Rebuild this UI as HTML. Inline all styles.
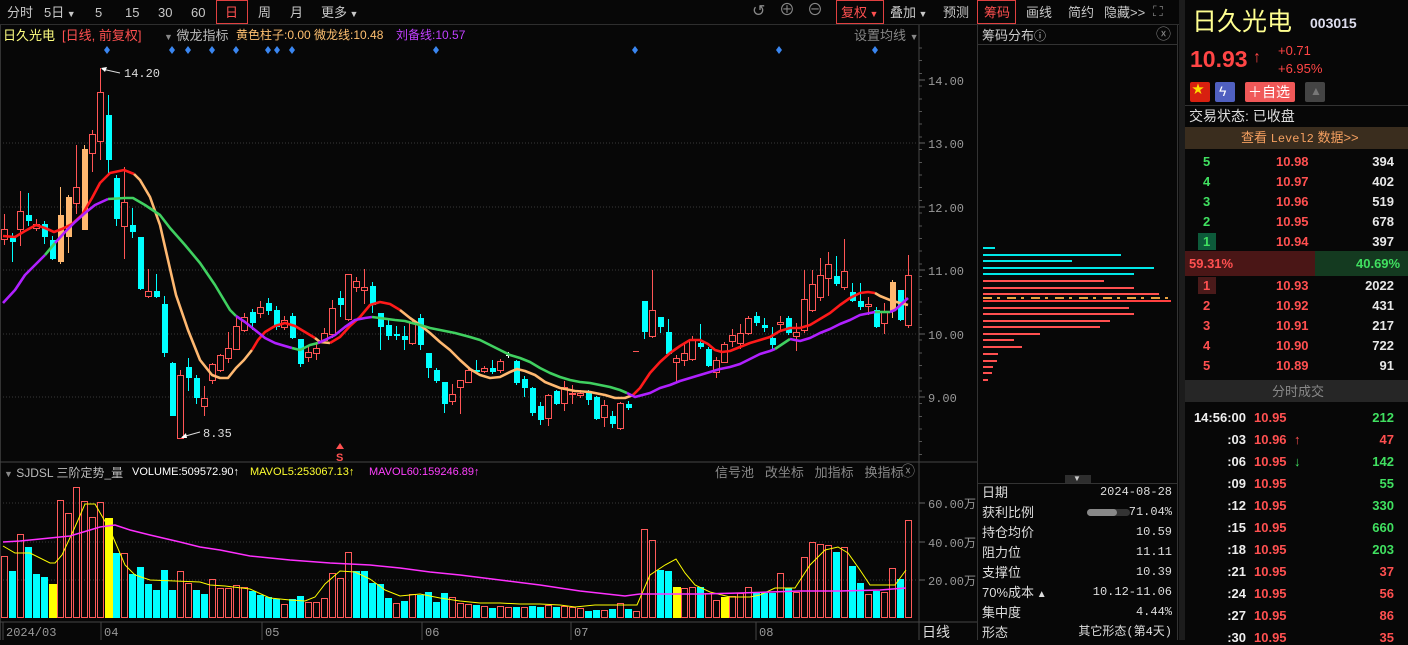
<!DOCTYPE html>
<html><head><meta charset="utf-8">
<style>
*{margin:0;padding:0;box-sizing:border-box}
body{width:1408px;height:640px;background:#070707;overflow:hidden;position:relative;font-family:"Liberation Sans","Noto Sans CJK SC",sans-serif;font-size:13px;color:#c8c8c8}
.a{position:absolute;white-space:nowrap;line-height:1}
.box{position:absolute;border:1px solid #e04040}
.m{font-family:"Liberation Mono","Noto Sans CJK SC",monospace}
.r{text-align:right}
</style></head><body>
<!-- toolbar -->
<div class="a" style="left:0;top:0;width:1180px;height:25px;border-bottom:1px solid #2e2e2e"></div>
<div class="a" style="left:7px;top:6px">分时</div>
<div class="a" style="left:44px;top:6px">5日<span style="font-size:9px"> ▼</span></div>
<div class="a" style="left:95px;top:6px">5</div>
<div class="a" style="left:125px;top:6px">15</div>
<div class="a" style="left:158px;top:6px">30</div>
<div class="a" style="left:191px;top:6px">60</div>
<div class="box" style="left:216px;top:0;width:32px;height:24px"></div>
<div class="a" style="left:225px;top:6px;color:#ff5050">日</div>
<div class="a" style="left:258px;top:6px">周</div>
<div class="a" style="left:290px;top:6px">月</div>
<div class="a" style="left:321px;top:6px">更多<span style="font-size:9px"> ▼</span></div>
<div class="a" style="left:752px;top:4px;font-size:16px;color:#888">↺</div>
<div class="a" style="left:779px;top:3px;font-size:16px;color:#888">⊕</div>
<div class="a" style="left:807px;top:3px;font-size:16px;color:#888">⊖</div>
<div class="box" style="left:836px;top:0;width:48px;height:24px"></div>
<div class="a" style="left:841px;top:6px;color:#ff5050">复权<span style="font-size:9px"> ▼</span></div>
<div class="a" style="left:890px;top:6px">叠加<span style="font-size:9px"> ▼</span></div>
<div class="a" style="left:943px;top:6px">预测</div>
<div class="box" style="left:977px;top:0;width:39px;height:24px"></div>
<div class="a" style="left:984px;top:6px;color:#ff5050">筹码</div>
<div class="a" style="left:1026px;top:6px">画线</div>
<div class="a" style="left:1068px;top:6px">简约</div>
<div class="a" style="left:1104px;top:6px">隐藏&gt;&gt;</div>
<div class="a" style="left:1153px;top:4px;font-size:14px;color:#888">⛶</div>

<!-- chart header -->
<div class="a" style="left:3px;top:29px;color:#ffff80">日久光电</div>
<div class="a" style="left:62px;top:29px;color:#ff5050">[日线, 前复权]</div>
<div class="a" style="left:164px;top:29px;color:#bbb"><span style="font-size:9px;color:#888">▼</span> 微龙指标</div>
<div class="a" style="left:236px;top:29px;color:#ffc070;font-size:12px">黄色柱子:0.00 微龙线:10.48</div>
<div class="a" style="left:396px;top:29px;color:#c040ff;font-size:12px">刘备线:10.57</div>
<div class="a" style="left:854px;top:29px;color:#888">设置均线 <span style="font-size:9px">▼</span></div>

<svg class="a" style="left:0;top:0" width="977" height="640" id="sv" shape-rendering="crispEdges"></svg>

<!-- volume header -->
<div class="a" style="left:4px;top:467px;color:#bbb;font-size:12px"><span style="font-size:9px;color:#888">▼</span> SJDSL 三阶定势_量</div>
<div class="a" style="left:132px;top:467px;color:#fff;font-size:11px">VOLUME:509572.90↑</div>
<div class="a" style="left:250px;top:467px;color:#ffff30;font-size:11px">MAVOL5:253067.13↑</div>
<div class="a" style="left:369px;top:467px;color:#ff40ff;font-size:11px">MAVOL60:159246.89↑</div>
<div class="a" style="left:715px;top:466px;color:#888">信号池&nbsp;&nbsp;&nbsp;改坐标&nbsp;&nbsp;&nbsp;加指标&nbsp;&nbsp;&nbsp;换指标</div>
<div class="a" style="left:901px;top:464px;color:#888;font-size:14px">ⓧ</div>
<div class="a" style="left:922px;top:625px;color:#ddd;font-size:14px">日线</div>

<!-- chip panel -->
<div class="a" style="left:977px;top:25px;width:1px;height:615px;background:#333"></div>
<div class="a" style="left:1177px;top:25px;width:1px;height:615px;background:#333"></div>
<div class="a" style="left:977px;top:44px;width:200px;height:1px;background:#333"></div>
<div class="a" style="left:982px;top:29px;color:#ccc">筹码分布<span style="font-size:12px">ⓘ</span></div>
<div class="a" style="left:1156px;top:27px;color:#888;font-size:15px">ⓧ</div>
<div class="a" style="left:1065px;top:475px;width:26px;height:8px;background:#2e2e2e"></div>
<div class="a" style="left:1073px;top:475px;font-size:8px;color:#ccc">▼</div>
<div class="a" style="left:977px;top:483px;width:200px;height:1px;background:#333"></div>
<div id="chip"></div>

<!-- right panel -->
<div class="a" style="left:1179px;top:0;width:6px;height:640px;background:#1c1c1c"></div>
<div class="a" style="left:1192px;top:10px;color:#ffff90;font-size:25px">日久光电</div>
<div class="a" style="left:1310px;top:16px;color:#dde;font-size:14px;font-weight:bold">003015</div>
<div class="a" style="left:1190px;top:48px;color:#ff4545;font-size:23px;font-weight:bold">10.93</div>
<div class="a" style="left:1253px;top:50px;color:#ff4545;font-size:16px;font-weight:bold">↑</div>
<div class="a" style="left:1278px;top:44px;color:#ff4545;font-size:13px">+0.71</div>
<div class="a" style="left:1278px;top:62px;color:#ff4545;font-size:13px">+6.95%</div>
<div class="a" style="left:1190px;top:82px;width:20px;height:20px;background:#d82010;border-radius:2px;color:#ffde00;font-size:12px;padding:1px 2px">★</div>
<div class="a" style="left:1215px;top:82px;width:20px;height:20px;background:#5060c0;border-radius:2px;color:#fff;font-size:14px;padding:2px 4px">ϟ</div>
<div class="a" style="left:1245px;top:82px;width:50px;height:20px;background:#f05858;border-radius:2px;color:#fff;font-size:14px;padding:3px 3px">＋自选</div>
<div class="a" style="left:1305px;top:82px;width:20px;height:20px;background:#444;border-radius:2px;color:#777;font-size:12px;padding:3px 5px">▲</div>
<div class="a" style="left:1185px;top:105px;width:223px;height:1px;background:#333"></div>
<div class="a" style="left:1189px;top:109px;color:#ddd;font-size:14px">交易状态: 已收盘</div>
<div class="a" style="left:1185px;top:127px;width:223px;height:22px;background:#3a2d1e"></div>
<div class="a" style="left:1241px;top:131px;color:#f5a060;font-size:13px">查看 <span class="m" style="font-size:12px">Level2</span> 数据&gt;&gt;</div>
<div class="a" style="left:1185px;top:251px;width:130px;height:25px;background:#4a1616"></div>
<div class="a" style="left:1315px;top:251px;width:93px;height:25px;background:#143a20"></div>
<div class="a" style="left:1189px;top:257px;color:#ff5050;font-size:13px;font-weight:bold">59.31%</div>
<div class="a" style="left:1356px;top:257px;color:#40e060;font-size:13px;font-weight:bold">40.69%</div>
<div class="a" style="left:1198px;top:233px;width:18px;height:17px;background:#0d5a3a"></div>
<div class="a" style="left:1198px;top:277px;width:18px;height:17px;background:#4a1a1a"></div>
<div id="ob"></div>
<div class="a" style="left:1185px;top:380px;width:223px;height:22px;background:#262626"></div>
<div class="a" style="left:1272px;top:385px;color:#888;font-size:13px">分时成交</div>
<div id="tr"></div>

<script>
const sv=document.getElementById('sv');
let h='';
[143,207,270,334,397].forEach(y=>{h+=`<line x1="0" x2="916" y1="${y}" y2="${y}" stroke="#3a3a3a" stroke-dasharray="1,2"/>`});
[503,542,580].forEach(y=>{h+=`<line x1="0" x2="916" y1="${y}" y2="${y}" stroke="#3a3a3a" stroke-dasharray="1,2"/>`});
h+=`<line x1="0.5" x2="0.5" y1="25" y2="640" stroke="#333"/>`;
h+=`<line x1="919" x2="919" y1="25" y2="640" stroke="#444"/>`;
h+=`<line x1="0" x2="977" y1="462" y2="462" stroke="#444"/>`;
h+=`<line x1="0" x2="977" y1="622" y2="622" stroke="#444"/>`;
[[80,'14.00'],[143,'13.00'],[207,'12.00'],[270,'11.00'],[334,'10.00'],[397,'9.00']].forEach(([y,t])=>{h+=`<line x1="919" x2="925" y1="${y}" y2="${y}" stroke="#666"/><text x="928" y="${y+5}" fill="#999" font-size="12" font-family="Liberation Mono">${t}</text>`});
for(let y=48;y<460;y+=12.7){h+=`<line x1="919" x2="922" y1="${y}" y2="${y}" stroke="#555"/>`}
[[503,'60.00万'],[542,'40.00万'],[580,'20.00万']].forEach(([y,t])=>{h+=`<line x1="919" x2="925" y1="${y}" y2="${y}" stroke="#666"/><text x="928" y="${y+5}" fill="#999" font-size="12" font-family="Liberation Mono,Noto Sans CJK SC">${t}</text>`});
[[3,'2024/03'],[101,'04'],[262,'05'],[422,'06'],[571,'07'],[756,'08']].forEach(([x,t])=>{h+=`<line x1="${x}" x2="${x}" y1="622" y2="640" stroke="#444"/><text x="${x+3}" y="636" fill="#999" font-size="12" font-family="Liberation Mono">${t}</text>`});
[107,172,188,212,236,268,277,292,436,635,779,875].forEach(x=>{h+=`<path d="M${x} 46l3 4-3 4-3-4z" fill="#3a86f0" shape-rendering="auto"/>`});
const C=`r 229 239 214 245|c 238 242 233 262|r 211 229 191 246|c 215 221 193 226|r 224 228 219 231|c 224 237 221 244|c 240 259 236 260|o 215 262 187 264|o 197 237 195 253|r 187 203 145 214|o 149 230 145 230|r 134 153 130 172|r 92 141 68 160|c 115 160 95 175|c 178 219 175 226|r 202 226 167 259|c 225 232 208 238|c 237 289 237 290|r 291 296 269 298|c 291 297 274 298|c 304 353 296 357|c 363 416 362 416|r 375 438 370 439|c 367 378 358 391|c 378 398 375 404|r 398 406 386 416|r 364 380 363 384|r 355 370 354 372|r 348 358 332 363|r 326 349 316 350|r 317 330 313 332|c 312 323 309 330|r 307 313 301 318|c 303 311 298 315|c 310 327 306 330|r 320 327 316 330|c 316 338 313 339|c 339 364 339 367|r 352 357 345 362|r 348 353 342 360|r 333 340 328 342|r 308 334 300 338|c 298 305 291 317|r 274 319 274 321|r 281 287 277 292|r 287 290 269 304|c 286 305 282 313|c 313 327 313 350|c 325 336 318 340|c 334 336 326 340|c 336 340 326 350|r 323 343 320 345|c 318 345 314 350|c 353 368 353 378|c 370 381 368 383|c 382 404 382 413|r 394 401 384 405|r 380 387 380 414|r 370 382 368 383|c 370 372 360 374|r 368 371 366 373|c 368 372 360 374|r 361 370 359 373|w 355 356 352 358|c 361 383 360 385|c 379 388 376 397|c 388 413 387 416|c 406 420 402 425|r 395 418 394 426|c 391 404 390 405|r 387 403 381 411|r 393 394 385 404|r 393 395 390 398|c 392 400 390 405|c 397 419 396 420|r 405 417 400 427|c 416 424 411 428|r 403 428 402 430|c 404 408 401 410|d 351 351 351 351|c 301 332 301 339|r 310 336 270 338|c 317 327 317 333|c 332 354 319 354|r 358 362 355 382|r 353 360 344 366|r 339 359 336 361|c 343 347 324 349|c 349 366 347 367|r 360 372 357 378|r 344 362 342 363|r 335 341 329 347|r 333 343 324 349|r 318 333 316 335|c 316 323 312 326|c 325 328 318 332|c 338 345 327 349|r 322 324 316 330|c 318 333 316 335|r 332 336 323 351|r 299 330 270 333|r 284 310 270 312|r 275 297 258 301|r 264 278 252 296|c 276 284 256 286|r 271 287 239 290|c 292 301 283 302|c 301 307 283 310|r 304 306 297 315|c 310 327 307 328|r 312 323 303 334|o 282 311 280 318|c 290 320 290 321|r 275 325 255 328`.split('|');
C.forEach((s,i)=>{const p=s.split(' ');const t=p[0];const [a,b,wt,wb]=p.slice(1).map(Number);const x=4+8*i;
 const col=t=='r'?'#ff5555':t=='c'?'#00ffff':t=='o'?'#ffb870':t=='w'?'#ffffff':'#ff5555';
 if(t=='d'){h+=`<line x1="${x-3}" x2="${x+3}" y1="351.5" y2="351.5" stroke="${col}"/>`;return}
 h+=`<line x1="${x+.5}" x2="${x+.5}" y1="${wt}" y2="${wb}" stroke="${col}"/>`;
 if(t=='r')h+=`<rect x="${x-2.5}" y="${a+.5}" width="6" height="${Math.max(b-a,1)}" fill="#070707" stroke="${col}"/>`;
 else h+=`<rect x="${x-2}" y="${a}" width="6" height="${Math.max(b-a,1)}" fill="${col}"/>`;
});
function pl(pts,col){h+=`<polyline points="${pts}" fill="none" stroke="${col}" stroke-width="2.6" stroke-linejoin="round" shape-rendering="auto"/>`}
pl('3,236 15,237 25,231 36,225 45,228 54,232 62,229 72,224 82,215 92,198 100,183 110,173 124,170 134,174','#ff1a1a');
pl('134,174 140,180 150,197 160,225 168,260 176,295 188,330 200,360 212,375 220,378 228,378 236,368 244,360 252,350','#ffb870');
pl('252,350 258,340 265,332 275,326 285,323 295,326 305,332 315,338','#ff1a1a');
pl('315,338 320,342 330,343','#ffb870');
pl('330,343 340,337 350,326 360,317 370,305 380,302 390,304 400,310','#ff1a1a');
pl('400,310 410,318 420,325 430,333 440,342 450,350 460,360 470,369 480,375 490,378 500,377 510,372 517,369 525,371 535,375 545,382 560,388 575,391 590,392 605,395 615,398 625,398 633,395','#ffb870');
pl('633,395 640,388 650,373 660,362 670,353 680,346 690,340 700,340 708,344 715,350 722,352 730,351 740,347 750,343 760,340 770,337 780,331 790,328 800,328 810,325 820,319 830,313 840,305 850,298 860,293 868,292 875,293','#ff1a1a');
pl('875,293 880,296 890,300 900,303 908,305','#ffb870');
pl('3,303 15,290 25,275 35,265 45,255','#b020ff');
pl('45,255 55,243','#40d060');
pl('55,243 65,232 75,222 85,213 95,205 108,199','#b020ff');
pl('108,199 125,198 133,198 145,205 160,215 170,228 185,245 200,263 215,285 230,310 236,316','#40d060');
pl('236,316 245,322 255,330 265,338 275,343 285,346 292,348','#b020ff');
pl('292,348 300,350 310,345 318,343','#40d060');
pl('318,343 325,340 335,335 345,327 355,320 365,318 372,317','#b020ff');
pl('372,317 380,318 395,320 405,321 412,323 420,325 430,328 440,330 455,333 470,337 480,340 490,345 500,350 510,355 520,358 530,362 540,368 550,373 560,377 570,380 580,382 590,383 600,385 610,387 620,390 627,393','#40d060');
pl('627,393 635,397 650,393 660,388 670,385 680,381 690,378 700,375 710,372 720,369 730,367 740,364 750,359 760,354 770,351 775,349','#b020ff');
pl('775,349 790,339','#40d060');
pl('790,339 800,341 810,338 820,333 830,329 840,324 850,320 860,315 870,313 875,312','#b020ff');
pl('875,312 890,312','#40d060');
pl('890,312 895,310 908,298','#b020ff');
h+=`<g shape-rendering="auto"><line x1="102" y1="69" x2="120" y2="73" stroke="#ddd"/><path d="M101 68l6 -1 -2 5z" fill="#fff"/><text x="124" y="77" fill="#ddd" font-size="12" font-family="Liberation Mono">14.20</text>`;
h+=`<line x1="182" y1="437" x2="200" y2="432" stroke="#ddd"/><path d="M181 438l5 -5 1 5z" fill="#fff"/><text x="203" y="437" fill="#ddd" font-size="12" font-family="Liberation Mono">8.35</text>`;
h+=`<path d="M340 443l4 6h-8z" fill="#ff5050"/><text x="336" y="461" fill="#ff5050" font-size="11" font-weight="bold" font-family="Liberation Sans">S</text></g>`;
const V=`r556 c571 r534 c547 c574 c577 y584 r500 r513 r487 r501 r517 r502 y518 c553 r553 c574 c567 c584 c590 c570 c590 r571 r583 c590 c594 r579 r588 r588 r585 r587 c591 c595 c597 c599 r604 c599 c596 r602 r602 r598 r573 r578 r552 c571 c571 c583 c584 c598 r603 c601 r594 c595 c592 c602 c593 r597 r603 r604 c605 r606 c608 r606 r607 c607 r607 c606 c607 r605 c607 r606 r607 r608 c611 c610 r610 c609 r603 c609 r611 r529 r540 c570 c571 y587 r588 r587 c587 r593 r600 y597 r596 r593 r587 c592 c593 c593 r573 c588 r592 r557 r542 r544 r545 c552 r547 c566 c583 r594 c591 r592 r568 c579 r520`.split(' ');
V.forEach((s,i)=>{const t=s[0],y=+s.slice(1);const x=4+8*i;
 if(t=='r')h+=`<rect x="${x-2.5}" y="${y+.5}" width="6" height="${617-y}" fill="none" stroke="#ff5a5a"/>`;
 else h+=`<rect x="${x-3}" y="${y}" width="${t=='y'?8:7}" height="${618-y}" fill="${t=='c'?'#00ffff':'#ffff00'}"/>`;
});
h+=`<polyline shape-rendering="auto" points="3,546 15,553 30,553 50,563 55,563 62,555 75,527 85,504 95,504 110,530 125,565 135,575 150,580 175,581 200,582 210,585 225,586 250,589 270,598 290,600 305,601 315,597 325,584 340,571 355,572 370,579 385,590 400,596 420,594 440,598 460,601 480,603 500,603 520,604 540,604 560,605 575,607 585,606 595,605 637,605 650,575 665,565 676,559 685,573 695,585 710,592 730,597 750,597 760,595 775,588 795,588 810,565 825,550 838,547 848,553 860,570 870,585 880,585 895,585 906,570" fill="none" stroke="#ffff00" stroke-width="1"/>`;
h+=`<polyline shape-rendering="auto" points="3,542 20,541 50,538 70,536 90,530 100,527 115,525 130,530 150,535 180,542 200,547 220,550 250,556 290,560 330,563 370,565 400,568 430,572 460,575 500,580 540,585 580,591 625,596 640,594 660,594 700,594 740,593 770,592 800,591 840,591 880,590 906,588" fill="none" stroke="#ff30ff" stroke-width="1.5"/>`;
let ch='';
h+=`<line x1="983.5" x2="983.5" y1="48" y2="235" stroke="#0aa" stroke-dasharray="1,5"/>`;
[[247,995,'#00e8e8'],[254,1121,'#00e8e8'],[260,1072,'#00e8e8'],[267,1154,'#00e8e8'],[273,1134,'#00e8e8'],[280,1104,'#ff5050'],[287,1134,'#ff5050'],[293,1159,'#ff5050'],[300,1171,'#ff4040'],[307,1129,'#ff5050'],[313,1134,'#ff5050'],[320,1110,'#ff5050'],[326,1100,'#ff5050'],[333,1040,'#ff5050'],[339,1014,'#ff5050'],[346,1022,'#ff5050'],[353,998,'#ff5050'],[360,997,'#ff5050'],[366,993,'#ff5050'],[372,992,'#ff5050'],[379,988,'#ff5050']].forEach(([y,x2,c])=>{
 ch+=`<div class="a" style="left:983px;top:${y}px;width:${x2-983}px;height:2px;background:${c}"></div>`});
ch+=`<div class="a" style="left:983px;top:297px;width:190px;height:2px;background:repeating-linear-gradient(90deg,#e8a040 0 9px,transparent 9px 14px,#e8a040 14px 17px,transparent 17px 24px)"></div>`;
const rows=[['日期','2024-08-28'],['获利比例','71.04%'],['持仓均价','10.59'],['阻力位','11.11'],['支撑位','10.39'],['70%成本','10.12-11.06'],['集中度','4.44%'],['形态','其它形态(第4天)']];
rows.forEach(([k,v],i)=>{const y=486+i*20;ch+=`<div class="a" style="left:982px;top:${y}px;font-size:13px;color:#ddd">${k}${i==5?'<span style="font-size:10px;color:#ddd"> ▲</span>':''}</div><div class="a m" style="right:${1408-1172}px;top:${y}px;font-size:12px;color:#ddd">${v}</div>`});
ch+=`<div class="a" style="left:1087px;top:509px;width:43px;height:7px;border-radius:4px;background:#333"></div><div class="a" style="left:1087px;top:509px;width:30px;height:7px;border-radius:4px;background:#888"></div>`;
document.getElementById('chip').innerHTML=ch;
sv.innerHTML=h;
let ob='';
const sell=[['5','10.98','394'],['4','10.97','402'],['3','10.96','519'],['2','10.95','678'],['1','10.94','397']];
const buy=[['1','10.93','2022'],['2','10.92','431'],['3','10.91','217'],['4','10.90','722'],['5','10.89','91']];
sell.forEach((r,i)=>{const y=155+i*20;ob+=`<div class="a" style="left:1203px;top:${y}px;color:#40e060;font-size:13px;font-weight:bold">${r[0]}</div><div class="a" style="left:1276px;top:${y}px;color:#ff5050;font-size:13px;font-weight:bold">${r[1]}</div><div class="a r" style="right:14px;top:${y}px;color:#e8e8e8;font-size:13px;font-weight:bold">${r[2]}</div>`});
buy.forEach((r,i)=>{const y=279+i*20;ob+=`<div class="a" style="left:1203px;top:${y}px;color:#ff5050;font-size:13px;font-weight:bold">${r[0]}</div><div class="a" style="left:1276px;top:${y}px;color:#ff5050;font-size:13px;font-weight:bold">${r[1]}</div><div class="a r" style="right:14px;top:${y}px;color:#e8e8e8;font-size:13px;font-weight:bold">${r[2]}</div>`});
document.getElementById('ob').innerHTML=ob;
let tr='';
const T=[['14:56:00','10.95','','212','g'],[':03','10.96','↑','47','r'],[':06','10.95','↓','142','g'],[':09','10.95','','55','g'],[':12','10.95','','330','g'],[':15','10.95','','660','g'],[':18','10.95','','203','g'],[':21','10.95','','37','r'],[':24','10.95','','56','r'],[':27','10.95','','86','r'],[':30','10.95','','35','r']];
T.forEach((r,i)=>{const y=411+i*22;const c=r[4]=='g'?'#40e060':'#ff5050';
 tr+=`<div class="a r" style="right:${1408-1246}px;top:${y}px;color:#eee;font-size:13px;font-weight:bold">${r[0]}</div><div class="a" style="left:1254px;top:${y}px;color:#ff5050;font-size:13px;font-weight:bold">${r[1]}</div><div class="a" style="left:1294px;top:${y}px;color:${r[2]=='↑'?'#ff5050':'#40e060'};font-size:13px;font-weight:bold">${r[2]}</div><div class="a r" style="right:14px;top:${y}px;color:${c};font-size:13px;font-weight:bold">${r[3]}</div>`});
document.getElementById('tr').innerHTML=tr;
</script>
</body></html>
